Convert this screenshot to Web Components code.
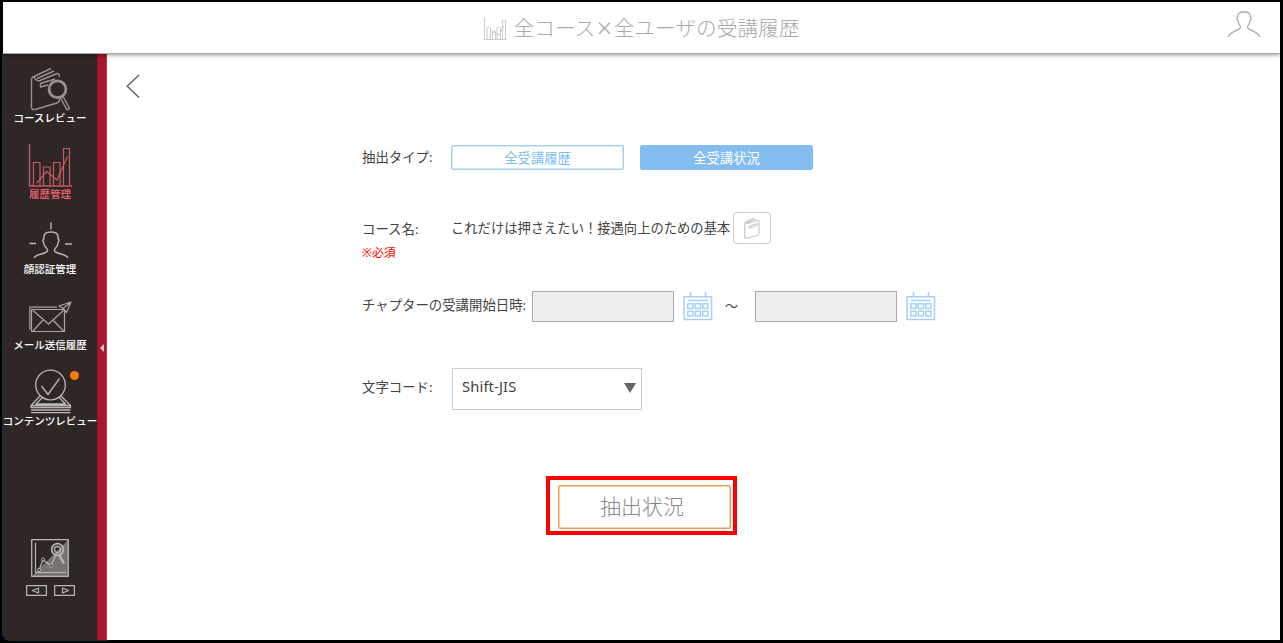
<!DOCTYPE html>
<html lang="ja">
<head>
<meta charset="utf-8">
<title>全コース×全ユーザの受講履歴</title>
<style>
html,body{margin:0;height:100%;background:#000}
body{font-family:"Noto Sans","Noto Sans CJK JP",sans-serif;color:#444;overflow:hidden}
</style>
</head>
<body>
<history-app></history-app>
<script>
const ICONS = {
  course: `<svg viewBox="3 66 94 46" stroke="#989390" stroke-width="1.400"><path d="M34 76.500 51 68.500M37 78.500 54 71M34 76.500Q31 77.500 31.500 81V107Q31.500 110 35 109.500L57 103Q59.500 102 59.500 99M34 76.500Q36 81.500 40 80.500L57 73.500Q59 73 59.500 77"/><path d="M55 79 40.500 83.500V87L48 85"/><circle cx="57.500" cy="89.300" r="8.400" stroke-width="2.800"/><path d="M60.500 98 67 110 69.500 108.500 63 96.500"/></svg>`,
  history: `<svg viewBox="3 142 94 46" stroke="#c75b66" stroke-width="1.200"><path d="M29.500 144V186H72" stroke-width="1.400"/><path d="M33.500 185.500V162.500H40V185.500M43.500 185.500V167H50V185.500M53.500 185.500V162.500H60V185.500M63.500 185.500V148.500H69.500V185.500"/><path d="M37 183 46.500 171.500 57 180 67.500 156.500"/></svg>`,
  face: `<svg viewBox="3 217 94 46" stroke="#bcb7b3" stroke-width="1.400"><path d="M51 222.500V229.500M29.500 243.500H36M65 244H72"/><path d="M34 258C35.500 253.500 46.500 254.500 47.500 250.500C48 248 44 247 43.800 243.500L42.800 240L44 238.500C43.500 233.500 46 232 51 232C56 232 58.500 233.500 58 238.500L59 240L58 243.500C57.800 247 54 248 54.500 250.500C55.500 254.500 66.500 253.500 68 258"/></svg>`,
  mail: `<svg viewBox="3 293 94 46" stroke="#aaa5a1" stroke-width="1.200"><path d="M57 307.200H29.800V329.500M31.500 309.500H64.500V331.500H31.500ZM33 310.500 48.500 324 63.500 310.500M33 331 43.500 319.500M63.500 331 52.500 319.500"/><path d="M71 302 59 306 63 308.500 66.500 312.500ZM71 302 63 308.500"/></svg>`,
  content: `<svg viewBox="3 369 94 46" stroke="#bcb7b3" stroke-width="1.300"><circle cx="50.500" cy="385" r="14.800"/><path d="M41.500 386 48 394.500 59.500 378.500M40 396 31 405.500H70.500L61 396M42.500 397.500 36 404H65.500L59 397.500M31 405.500V407.500H70.500V405.500M31 410H70.500M31 412.700H70.500"/></svg>`,
  person: `<svg width="34" height="27" viewBox="0 0 34 27" stroke="#aaa" stroke-width="1.300"><path d="M1.500 26C1.500 20 12 20.500 13.500 16.500C13.500 14 11 12.500 10.800 9.500L9.800 8L10.800 6C10.500 2 12.500 1 17 1C21.500 1 23.500 2 23.200 6L24.200 8L23.200 9.500C23 12.500 20.500 14 20.500 16.500C22 20.500 32.500 20 32.500 26"/></svg>`,
  chart: `<svg width="23" height="23" viewBox="0 0 23 23" stroke="#ccc"><path d="M.5 1V22.500H22"/><path d="M3 22V11Q4.700 9.500 6.500 11V22M8.500 22V14H11.500V22M13 22V11Q15 9.500 16.500 11V22M18.500 22V3.500H21.500V22M5 20 10 15 15 18 20 9"/></svg>`,
  book: `<svg width="16" height="22" viewBox="0 0 16 22" stroke="#c8c8c8" stroke-width="1.200"><path d="M2 4.500 10 1M3 5.500 12 2M2 4.500Q.7 5.500.7 7V19.500Q.7 21.500 3 21L13 18.500Q15 18 15 16V5Q15 3 13 3.500L4 6.500Q2.500 7 2 4.500M5.500 9 13 6.500V8.500L5.500 11Z"/></svg>`,
  calendar: `<svg width="30" height="29" viewBox="0 0 30 29" stroke="#a5d0f7" stroke-width="1.500"><path d="M1 4.800H28.500V27.500H1ZM7.500 0V5M22.500 0V5M5 8.500H25"/><path d="M4.800 11.800H10V16.500H4.800ZM12.300 11.800H17.500V16.500H12.300ZM19.800 11.800H25V16.500H19.800ZM4.800 19.300H10V24H4.800ZM12.300 19.300H17.500V24H12.300ZM19.800 19.300H25V24H19.800Z"/></svg>`,
  back: `<svg width="14" height="24" viewBox="0 0 14 24" stroke="#666" stroke-width="1.500"><path d="M13 1 1.200 12.200 13 23.500"/></svg>`,
  graph: `<svg width="38" height="38" viewBox="0 0 38 38" stroke="#bab6b3"><path d="M37 1V37H1Z" fill="#777371" stroke="none"/><path d="M.7.700H37.300V37.300H.7Z" stroke-width="1.300"/><path d="M4.500 4V33.500H35M8 31 12 21 20 26.500 25.500 14.500" stroke-width="1.200"/><g fill="#2f2725"><circle cx="8" cy="31" r="1.500"/><circle cx="12" cy="20.500" r="1.500"/><circle cx="20" cy="26.500" r="1.500"/></g><circle cx="26.500" cy="10.500" r="5.800" stroke-width="1.800"/><circle cx="26.500" cy="10.500" r="3" stroke-width="1.300"/><path d="M28.500 16.500 33 24.500" stroke-width="2.500"/></svg>`,
  prev: `<svg width="21" height="11" viewBox="0 0 21 11" stroke="#bab6b3" stroke-width="1.200"><path d="M.6.600H20.400V10.400H.6ZM12.500 3 6.500 5.500 12.500 8Z"/></svg>`,
  next: `<svg width="21" height="11" viewBox="0 0 21 11" stroke="#bab6b3" stroke-width="1.200"><path d="M.6.600H20.400V10.400H.6ZM8.500 3 14.500 5.500 8.500 8Z"/></svg>`
};
function define(name, css, html) {
  customElements.define(name, class extends HTMLElement {
    connectedCallback() {
      if (this.shadowRoot) return;
      const t = document.createElement('template');
      t.innerHTML = `<style>*{box-sizing:border-box}${css}</style>` + (typeof html === 'function' ? html(this) : html);
      this.attachShadow({mode: 'open'}).append(t.content.cloneNode(true));
    }
  });
}
define('app-icon', `:host{display:block;flex:none}svg{display:block;fill:none;stroke-linejoin:round}`, el => ICONS[el.getAttribute('name')]);
define('nav-item', `
:host{display:block;position:relative;width:94px;color:#fff;text-align:center}
:host([active]){color:#f0636f}
.l{font-size:10.500px;font-weight:500;line-height:14px;white-space:nowrap;display:flex;justify-content:center;margin-top:-1px}
.dot{position:absolute;left:67px;top:2px;width:9px;height:9px;border-radius:50%;background:#f57c00}`,
  el => `<app-icon name="${el.getAttribute('icon')}"></app-icon><div class="l"><slot></slot></div>${el.hasAttribute('badge') ? '<i class="dot"></i>' : ''}`);
define('side-nav', `
:host{display:flex;background:#2f2725;border-bottom-left-radius:7px;overflow:hidden;box-shadow:0 0 0 1px #17343c}
.main{width:94px;display:flex;flex-direction:column;padding-top:12px}
.items{display:grid;grid-template-rows:76px 75px 76px 76px 76px}
.tools{margin:94px auto 0;display:grid;justify-items:center;gap:8px}
.pager{display:flex;gap:7px}
.rail{width:10px;background:#a5182f;border-right:1px solid #b13145;border-left:1px solid #8d1428;display:flex;align-items:center;justify-content:center}
.rail i{border:4px solid transparent;border-right:4px solid #ddc5c8;border-left:0;margin-top:2px}`, `
<div class="main"><div class="items">
<nav-item icon="course">コースレビュー</nav-item>
<nav-item icon="history" active>履歴管理</nav-item>
<nav-item icon="face">顔認証管理</nav-item>
<nav-item icon="mail">メール送信履歴</nav-item>
<nav-item icon="content" badge>コンテンツレビュー</nav-item></div>
<div class="tools"><app-icon name="graph"></app-icon><div class="pager"><app-icon name="prev"></app-icon><app-icon name="next"></app-icon></div></div></div>
<div class="rail"><i></i></div>`);
define('app-header', `
:host{display:grid;grid-template-columns:1fr auto 1fr;background:#fff;border-bottom:1px solid #aaa;box-shadow:0 1px 4px #0006;z-index:1}
.t{display:flex;gap:7px;align-items:flex-start;color:#aaa;font-size:20.700px;font-weight:300;line-height:30px;white-space:nowrap;padding-top:11px}
.t app-icon{margin-top:4px}
::slotted(.times){font-size:27px;line-height:20px;vertical-align:-2px;margin:0 1.500px}
.u{justify-self:end;margin:9px 19px 0 0}`,
  `<span></span><div class="t"><app-icon name="chart"></app-icon><div><slot></slot></div></div><app-icon class="u" name="person"></app-icon>`);
define('type-button', `
:host{display:block;width:173px;height:25px;border:1px solid #a3cff6;box-shadow:inset 0 0 0 .5px #a3cff6;border-radius:2px;color:#83bdf0;font-size:13.330px;line-height:24px;text-align:center}
:host([selected]){background:#83bdf0;color:#fff;border-color:#83bdf0;box-shadow:none}`, `<slot></slot>`);
define('form-row', `
:host{display:flex;align-items:flex-start;font-size:13.400px;line-height:20px;white-space:nowrap}
.label{width:var(--label,89px);flex:none;padding-top:var(--top,0)}
.note{display:block;color:#f00;font-size:11.900px;line-height:16px;margin-top:5px}`,
  el => `<div class="label"><span>${el.getAttribute('label')}</span>${el.hasAttribute('note') ? `<span class="note">${el.getAttribute('note')}</span>` : ''}</div><slot></slot>`);
define('date-input', `
:host{display:flex;gap:9px}
.f{width:142px;height:31px;background:#eee;border:1px solid #aaa}
app-icon{margin-top:1px}`, `<div class="f"></div><app-icon name="calendar"></app-icon>`);
define('select-box', `
:host{display:flex;width:190px;height:42px;border:1px solid #ccc;justify-content:space-between;padding:7px 5px 0 9px;font-size:14.800px;line-height:20px;letter-spacing:.1px}
i{border:6px solid transparent;border-top:10px solid #666;border-bottom:0;margin-top:7px}`, `<slot></slot><i></i>`);
define('book-button', `:host{display:grid;place-items:center;width:38px;height:32px;border:1px solid #ccc;border-radius:4px;margin-left:2px}`, `<app-icon name="book"></app-icon>`);
define('submit-button', `
:host{display:block;width:191px;height:59px;border:4px solid #f00;padding:5px 4px 3px 8px}
div{height:44px;width:173px;border:1px solid #e8a050;box-shadow:inset 0 0 0 .5px #e8a050;border-radius:2px;color:#888;font-size:21px;font-weight:300;line-height:40px;text-align:center;padding-right:5px}`, `<div><slot></slot></div>`);
define('extract-page', `
:host{display:block;background:#fff}
.back{margin:20px 0 0 19px}
.form{margin:47px 0 0 255px;display:flex;flex-direction:column;align-items:flex-start}
.types{display:flex;gap:16px}
.r1{height:67px;--top:2px}
.r2{height:79px;padding-top:6px;--top:.5px}
.r3{height:77px;--label:170px;--top:4px}
.r4{height:108px;--top:9px}
.course{display:flex;margin-top:-6px}
.course span{margin-top:6px;width:280px;font-size:13.300px}
.tilde{width:42px;text-align:center;padding-right:5px;line-height:30px}
select-box{margin-left:1px}
submit-button{margin-left:184px}`, `
<app-icon class="back" name="back"></app-icon>
<div class="form">
<form-row class="r1" label="抽出タイプ:"><div class="types"><type-button>全受講履歴</type-button><type-button selected>全受講状況</type-button></div></form-row>
<form-row class="r2" label="コース名:" note="※必須"><div class="course"><span>これだけは押さえたい！接遇向上のための基本</span><book-button></book-button></div></form-row>
<form-row class="r3" label="チャプターの受講開始日時:"><date-input></date-input><span class="tilde">～</span><date-input></date-input></form-row>
<form-row class="r4" label="文字コード:"><select-box>Shift-JIS</select-box></form-row>
<submit-button>抽出状況</submit-button>
</div>`);
define('history-app', `
:host{display:grid;box-sizing:border-box;width:1283px;height:643px;background:#000;padding:2px 3px 3px 3px;grid-template:52px 1fr/104px 1fr}
app-header{grid-column:1/3}`, `<app-header>全コース<span class="times">×</span>全ユーザの受講履歴</app-header><side-nav></side-nav><extract-page></extract-page>`);
</script>
</body>
</html>
